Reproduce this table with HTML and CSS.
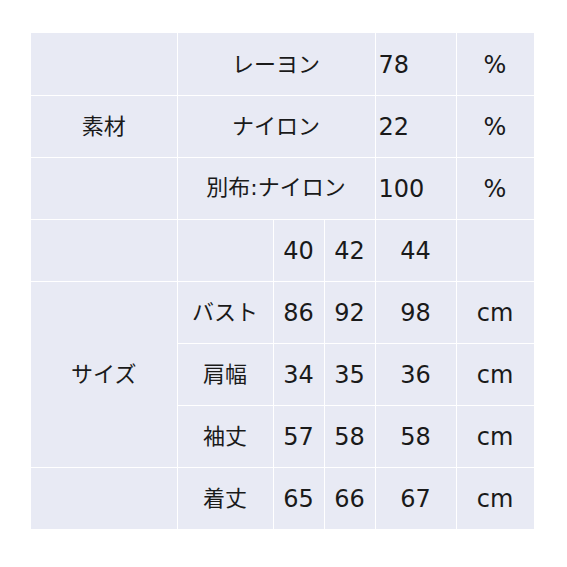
FILE: index.html
```html
<!DOCTYPE html>
<html lang="ja">
<head>
<meta charset="utf-8">
<link rel="stylesheet" href="styles.css">
</head>
<body>
<div class="wrap">
<table class="spec">
  <colgroup>
    <col class="c1"><col class="c2"><col class="c3"><col class="c4"><col class="c5"><col class="c6">
  </colgroup>
  <tr><td></td><td colspan="3" class="ja">レーヨン</td><td class="val">78</td><td>%</td></tr>
  <tr><td class="ja">素材</td><td colspan="3" class="ja">ナイロン</td><td class="val">22</td><td>%</td></tr>
  <tr><td></td><td colspan="3" class="ja">別布<span class="lat">:</span>ナイロン</td><td class="val">100</td><td>%</td></tr>
  <tr><td></td><td></td><td>40</td><td>42</td><td>44</td><td></td></tr>
  <tr><td rowspan="3" class="ja">サイズ</td><td class="ja">バスト</td><td>86</td><td>92</td><td>98</td><td>cm</td></tr>
  <tr><td class="ja">肩幅</td><td>34</td><td>35</td><td>36</td><td>cm</td></tr>
  <tr><td class="ja">袖丈</td><td>57</td><td>58</td><td>58</td><td>cm</td></tr>
  <tr><td></td><td class="ja">着丈</td><td>65</td><td>66</td><td>67</td><td>cm</td></tr>
</table>
</div>
</body>
</html>
```

FILE: styles.css
```css
html, body {
  margin: 0;
  padding: 0;
  background: #ffffff;
}

.wrap {
  padding: 33px 0 0 31px;
}

.spec {
  border-collapse: collapse;
  table-layout: fixed;
  width: 503px;
  font-family: "DejaVu Sans", "Noto Sans CJK JP", sans-serif;
  font-size: 24px;
  color: #1a1a1a;
}

.c1 { width: 146px; }
.c2 { width: 96px; }
.c3 { width: 51px; }
.c4 { width: 51px; }
.c5 { width: 81px; }
.c6 { width: 78px; }

.spec td {
  height: 62px;
  padding: 2px 0 0 0;
  box-sizing: border-box;
  background: #e8eaf4;
  border: 1px solid #ffffff;
  text-align: center;
  vertical-align: middle;
  white-space: nowrap;
  line-height: 1;
}

.spec tr:first-child td { border-top: none; }
.spec td:first-child { border-left: none; }

.spec td.ja {
  font-family: "Noto Sans CJK JP", sans-serif;
  font-size: 22px;
  padding: 0 0 4px 0;
}

.spec td.ja .lat {
  font-family: "DejaVu Sans", sans-serif;
}

.spec td.val {
  text-align: left;
  padding-left: 3px;
}
```
